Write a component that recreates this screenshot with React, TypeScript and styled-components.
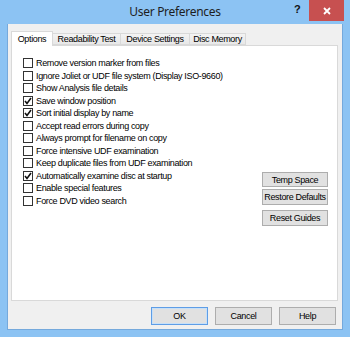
import { FC } from 'react';
import styled, { createGlobalStyle } from 'styled-components';

const GlobalStyle = createGlobalStyle`
  html, body {
    margin: 0;
    padding: 0;
    background: #ffffff;
  }
`;

const Window = styled.div`
  width: 350px;
  height: 337px;
  background: #8cc3f3;
  display: flex;
  flex-direction: column;
  box-sizing: border-box;
  font-family: 'Liberation Sans', Arial, sans-serif;
  font-size: 9px;
  letter-spacing: -0.35px;
  color: #000;
`;

const TitleBar = styled.div`
  height: 24px;
  display: flex;
  align-items: flex-start;
  position: relative;
`;

const Title = styled.div`
  flex: 1;
  text-align: center;
  font-family: 'Noto Sans', 'Open Sans', sans-serif;
  font-size: 12px;
  line-height: 24px;
  color: #1e1e1e;
  letter-spacing: -0.3px;
`;

const HelpGlyph = styled.div`
  position: absolute;
  left: 294px;
  top: 3px;
  font-family: 'Liberation Sans', Arial, sans-serif;
  font-weight: bold;
  font-size: 11px;
  color: #111;
`;

const CloseButton = styled.div`
  position: absolute;
  right: 6px;
  top: 0;
  width: 35px;
  height: 21px;
  background: #c75050;
  display: flex;
  align-items: center;
  justify-content: center;
`;

const Client = styled.div`
  margin: 0 7px 7px;
  flex: 1;
  background: #f0f0f0;
  border: 1px solid #75a9dc;
  border-width: 0 1px 1px 1px;
  box-sizing: border-box;
  padding: 7px 5px 0 3px;
  display: flex;
  flex-direction: column;
`;

const TabRow = styled.div`
  display: flex;
  align-items: flex-end;
  height: 14px;
  position: relative;
  z-index: 1;
`;

const Tab = styled.div<{ $active?: boolean; $w: number }>`
  width: ${(p) => p.$w}px;
  height: ${(p) => (p.$active ? 15 : 12)}px;
  margin-bottom: ${(p) => (p.$active ? -1 : 0)}px;
  box-sizing: border-box;
  border: 1px solid #d9d9d9;
  border-bottom: ${(p) => (p.$active ? 'none' : '1px solid #d9d9d9')};
  border-left: ${(p) => (p.$active ? '1px solid #d9d9d9' : 'none')};
  background: ${(p) => (p.$active ? '#ffffff' : 'linear-gradient(#f3f3f3, #e8e8e8)')};
  display: flex;
  align-items: center;
  justify-content: center;
  white-space: nowrap;
  line-height: 1;
  padding-top: ${(p) => (p.$active ? 0 : 1)}px;
`;

const Panel = styled.div`
  width: 327px;
  height: 256px;
  box-sizing: border-box;
  background: #ffffff;
  border: 1px solid #d9d9d9;
  padding: 11px 9px 0 11px;
  display: flex;
  justify-content: space-between;
`;

const OptionList = styled.div`
  display: flex;
  flex-direction: column;
`;

const OptionRow = styled.div`
  height: 12.5px;
  display: flex;
  align-items: center;
  white-space: nowrap;
`;

const Box = styled.div`
  width: 10px;
  height: 10px;
  box-sizing: border-box;
  border: 1px solid #333333;
  background: #ffffff;
  margin-right: 3px;
  display: flex;
  align-items: center;
  justify-content: center;
  flex-shrink: 0;
`;

const SideButtons = styled.div`
  margin-top: 115px;
  display: flex;
  flex-direction: column;
  width: 66px;
`;

const Button = styled.div<{ $h?: number; $gap?: number; $default?: boolean }>`
  height: ${(p) => p.$h ?? 16}px;
  margin-top: ${(p) => p.$gap ?? 0}px;
  box-sizing: border-box;
  border: 1px solid ${(p) => (p.$default ? '#5e9de6' : '#adadad')};
  box-shadow: ${(p) => (p.$default ? 'inset 0 0 0 1px #c7e0f8' : 'none')};
  background: #e1e1e1;
  display: flex;
  align-items: center;
  justify-content: center;
  white-space: nowrap;
`;

const Footer = styled.div`
  display: flex;
  justify-content: flex-end;
  gap: 7px;
  margin-top: 6px;
  padding-right: 1px;
`;

const FooterButton = styled(Button)`
  width: 57px;
`;

const Check: FC = () => (
  <svg width="8" height="8" viewBox="0 0 8 8">
    <polyline points="1,4 3,6.5 7,1" fill="none" stroke="#111" strokeWidth="1.6" />
  </svg>
);

const options: [string, boolean][] = [
  ['Remove version marker from files', false],
  ['Ignore Joliet or UDF file system (Display ISO-9660)', false],
  ['Show Analysis file details', false],
  ['Save window position', true],
  ['Sort initial display by name', true],
  ['Accept read errors during copy', false],
  ['Always prompt for filename on copy', false],
  ['Force intensive UDF examination', false],
  ['Keep duplicate files from UDF examination', false],
  ['Automatically examine disc at startup', true],
  ['Enable special features', false],
  ['Force DVD video search', false],
];

const App: FC = () => (
  <Window>
    <GlobalStyle />
    <TitleBar>
      <Title>User Preferences</Title>
      <HelpGlyph>?</HelpGlyph>
      <CloseButton>
        <svg width="8" height="8" viewBox="0 0 8 8">
          <path d="M1 1 L7 7 M7 1 L1 7" stroke="#fff" strokeWidth="1.8" />
        </svg>
      </CloseButton>
    </TitleBar>
    <Client>
      <TabRow>
        <Tab $active $w={42}>Options</Tab>
        <Tab $w={68}>Readability Test</Tab>
        <Tab $w={69}>Device Settings</Tab>
        <Tab $w={56}>Disc Memory</Tab>
      </TabRow>
      <Panel>
        <OptionList>
          {options.map(([label, checked]) => (
            <OptionRow key={label}>
              <Box>{checked && <Check />}</Box>
              {label}
            </OptionRow>
          ))}
        </OptionList>
        <SideButtons>
          <Button $h={15}>Temp Space</Button>
          <Button $h={16} $gap={2}>Restore Defaults</Button>
          <Button $h={16} $gap={5}>Reset Guides</Button>
        </SideButtons>
      </Panel>
      <Footer>
        <FooterButton $h={18} $default>OK</FooterButton>
        <FooterButton $h={18}>Cancel</FooterButton>
        <FooterButton $h={18}>Help</FooterButton>
      </Footer>
    </Client>
  </Window>
);

export default App;
